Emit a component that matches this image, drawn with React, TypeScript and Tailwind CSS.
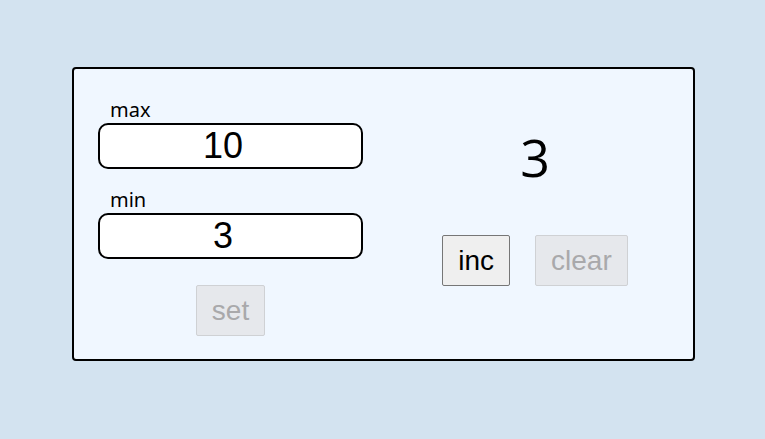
import React, { useState } from "react"

// Counter settings card: max/min inputs on the left, value + controls on the right
export default function App() {
  const [max, setMax] = useState("10")
  const [min, setMin] = useState("3")
  const [value, setValue] = useState(3)

  const btn =
    "px-[15px] py-2 text-[28px] leading-[33px] border rounded-[2px] font-['Liberation_Sans',Arial,sans-serif]"
  const field =
    "mt-[2px] h-[46px] w-full bg-white border-2 border-black rounded-[10px] text-center text-[36px] leading-[42px] text-black font-['Liberation_Sans',Arial,sans-serif] outline-none"

  return (
    <div className="w-[765px] h-[439px] bg-[#d3e3f0] pt-[67px] pl-[72px] font-['Noto_Sans','Open_Sans',sans-serif]">
      <div className="w-[623px] h-[294px] bg-[#f0f7ff] border-2 border-black rounded-[4px] flex pl-6 pt-[29px]">
        {/* left: max / min */}
        <div className="w-[265px] flex flex-col">
          <label className="ml-3 text-[20px] leading-[23px] text-black">max</label>
          <input type="number" value={max} onChange={(e) => setMax(e.target.value)} className={field} />
          <label className="mt-[19px] ml-3 text-[20px] leading-[23px] text-black">min</label>
          <input type="number" value={min} onChange={(e) => setMin(e.target.value)} className={field} />
          <div className="mt-[26px] flex justify-center">
            <button disabled className={`${btn} bg-[#e6e8ec] border-[#cfd1d4] text-[#a9a9ab]`}>
              set
            </button>
          </div>
        </div>

        {/* right: value + buttons */}
        <div className="ml-[38px] w-[268px] flex flex-col items-center pt-[29px]">
          <div className="text-[52px] leading-[60px] text-black font-['Open_Sans',sans-serif]">{value}</div>
          <div className="mt-[48px] flex gap-[25px]">
            <button
              onClick={() => setValue((v) => v + 1)}
              className={`${btn} bg-[#efefef] border-[#767676] text-black`}
            >
              inc
            </button>
            <button disabled className={`${btn} bg-[#e6e8ec] border-[#cfd1d4] text-[#a9a9ab]`}>
              clear
            </button>
          </div>
        </div>
      </div>
    </div>
  )
}
